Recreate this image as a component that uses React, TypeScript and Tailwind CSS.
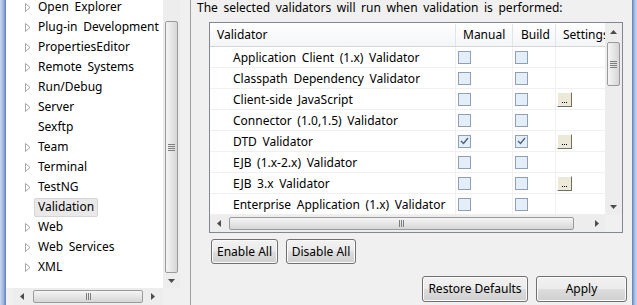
import React from "react";

const tree = [
  { label: "Open Explorer", arrow: true },
  { label: "Plug-in Development", arrow: true },
  { label: "PropertiesEditor", arrow: true },
  { label: "Remote Systems", arrow: true },
  { label: "Run/Debug", arrow: true },
  { label: "Server", arrow: true },
  { label: "Sexftp", arrow: false },
  { label: "Team", arrow: true },
  { label: "Terminal", arrow: true },
  { label: "TestNG", arrow: true },
  { label: "Validation", arrow: false, selected: true },
  { label: "Web", arrow: true },
  { label: "Web Services", arrow: true },
  { label: "XML", arrow: true },
];

const validators = [
  { name: "Application Client (1.x) Validator", on: false, dots: false },
  { name: "Classpath Dependency Validator", on: false, dots: false },
  { name: "Client-side JavaScript", on: false, dots: true },
  { name: "Connector (1.0,1.5) Validator", on: false, dots: false },
  { name: "DTD Validator", on: true, dots: true },
  { name: "EJB (1.x-2.x) Validator", on: false, dots: false },
  { name: "EJB 3.x Validator", on: false, dots: true },
  { name: "Enterprise Application (1.x) Validator", on: false, dots: false },
];

function Tri({ dir }: { dir: "up" | "down" | "left" | "right" }) {
  const pts = {
    up: "0,4 7,4 3.5,0",
    down: "0,0 7,0 3.5,4",
    left: "4,0 4,7 0,3.5",
    right: "0,0 0,7 4,3.5",
  }[dir];
  const vertical = dir === "up" || dir === "down";
  return (
    <svg width={vertical ? 7 : 4} height={vertical ? 4 : 7} className="block">
      <polygon points={pts} fill="#4d4d4d" />
    </svg>
  );
}

function Grip({ vertical }: { vertical?: boolean }) {
  return vertical ? (
    <div className="flex flex-col gap-[1px]">
      <span className="block h-px w-[7px] bg-[#7d7d7d]" />
      <span className="block h-px w-[7px] bg-[#7d7d7d]" />
      <span className="block h-px w-[7px] bg-[#7d7d7d]" />
      <span className="block h-px w-[7px] bg-[#7d7d7d]" />
    </div>
  ) : (
    <div className="flex gap-[1px]">
      <span className="block h-[7px] w-px bg-[#7d7d7d]" />
      <span className="block h-[7px] w-px bg-[#7d7d7d]" />
      <span className="block h-[7px] w-px bg-[#7d7d7d]" />
    </div>
  );
}

function Checkbox({ checked }: { checked: boolean }) {
  return (
    <span className="flex h-[13px] w-[13px] items-center justify-center border border-[#8e9fb6] bg-[#e4eef9]">
      {checked && (
        <svg width="9" height="8" viewBox="0 0 9 8">
          <path d="M1 4 L3.5 6.5 L8 1" stroke="#4b6283" strokeWidth="1.4" fill="none" />
        </svg>
      )}
    </span>
  );
}

function Dots() {
  return (
    <span className="flex h-[15px] w-[15px] items-end justify-center border-t border-l border-t-white border-l-white border-r border-b border-r-[#716f64] border-b-[#716f64] bg-[#ece9d8] pb-[3px]">
      <span className="flex gap-[1px]">
        <span className="block h-px w-px bg-black" />
        <span className="block h-px w-px bg-black" />
        <span className="block h-px w-px bg-black" />
      </span>
    </span>
  );
}

function Button({ label, w, h }: { label: string; w: string; h: string }) {
  return (
    <button
      className={`${w} ${h} flex items-center justify-center rounded-[3px] border border-[#707070] bg-[linear-gradient(#f2f2f2_0%,#ebebeb_48%,#dddddd_52%,#cfcfcf_100%)] shadow-[inset_0_0_0_1px_#fbfbfb] text-[12px] text-black`}
    >
      {label}
    </button>
  );
}

export default function App() {
  return (
    <div className="flex h-[305px] w-[637px] overflow-hidden bg-[#f0f0f0] font-['Noto_Sans',sans-serif] text-[12px] leading-[16px] text-black [word-spacing:2.5px]">
      {/* window frame, left */}
      <div className="w-[6px] shrink-0 bg-linear-to-r from-[#c8d8ef] via-[#a3bbe0] to-[#5b80bc]" />

      {/* preference tree */}
      <div className="flex w-[174px] shrink-0 flex-col">
        <div className="flex h-[288px]">
          <div className="w-[157px] overflow-hidden bg-white">
            <ul className="-mt-[3px]">
              {tree.map((item) => (
                <li key={item.label} className="flex h-[20px] items-center pl-[19px]">
                  <span className="flex w-[6px] justify-center">
                    {item.arrow && (
                      <svg width="6" height="9" viewBox="0 0 6 9">
                        <path d="M0.5 0.5 L5 4.5 L0.5 8.5 Z" fill="none" stroke="#a6a6a6" />
                      </svg>
                    )}
                  </span>
                  <span
                    className={`ml-[3px] flex h-[19px] items-center whitespace-nowrap rounded-[2px] border px-[3px] ${
                      item.selected ? "border-[#d4d4d4] bg-[#e9e9e9]" : "border-transparent"
                    }`}
                  >
                    {item.label}
                  </span>
                </li>
              ))}
            </ul>
          </div>
          {/* vertical scrollbar */}
          <div className="flex w-[17px] flex-col bg-[#ededed]">
            <div className="mx-[2px] mt-[21px] flex h-[252px] items-center justify-center rounded-[2px] border border-[#9a9a9a] bg-linear-to-r from-[#f5f5f5] to-[#d6d6d6]">
              <Grip vertical />
            </div>
            <div className="flex flex-1 items-center justify-center">
              <Tri dir="down" />
            </div>
          </div>
        </div>
        <div className="flex h-[17px]">
          <div className="w-[7px]" />
          <div className="flex w-[150px] bg-[#ededed]">
            <div className="flex w-[17px] items-center justify-center">
              <Tri dir="left" />
            </div>
            <div className="my-[2px] ml-[3px] flex w-[110px] items-center justify-center rounded-[2px] border border-[#9a9a9a] bg-linear-to-b from-[#f5f5f5] to-[#d6d6d6]">
              <Grip />
            </div>
            <div className="flex flex-1 items-center justify-center">
              <Tri dir="right" />
            </div>
          </div>
          <div className="w-[17px]" />
        </div>
      </div>

      <div className="w-[10px] shrink-0" />
      <div className="w-px shrink-0 bg-[#a0a0a0]" />

      {/* validation page */}
      <div className="flex w-[441px] shrink-0 flex-col">
        <p className="pl-[6px] whitespace-nowrap">
          The selected validators will run when validation is performed:
        </p>

        <div className="ml-[18px] mt-[6px] flex h-[211px] w-[414px] border border-[#828790] bg-white">
          <div className="flex w-[395px] flex-col">
            {/* header */}
            <div className="flex h-[24px] border-b border-[#d5d5d5] bg-linear-to-b from-white to-[#f4f5f7] pt-px">
              <div className="flex w-[246px] items-center border-r border-[#e3e4e6] pl-[7px]">Validator</div>
              <div className="flex w-[57px] items-center border-r border-[#e3e4e6] pl-[7px]">Manual</div>
              <div className="flex w-[43px] items-center border-r border-[#e3e4e6] pl-[8px]">Build</div>
              <div className="flex w-[49px] items-center overflow-hidden whitespace-nowrap pl-[7px]">Settings</div>
            </div>
            {/* rows */}
            {validators.map((v) => (
              <div key={v.name} className="flex h-[21px] border-b border-[#f0f0f0]">
                <div className="flex w-[246px] items-center overflow-hidden whitespace-nowrap border-r border-[#f0f0f0] pl-[23px] pt-[2px]">
                  {v.name}
                </div>
                <div className="flex w-[57px] items-center border-r border-[#f0f0f0] pl-[2px]">
                  <Checkbox checked={v.on} />
                </div>
                <div className="flex w-[43px] items-center border-r border-[#f0f0f0] pl-[2px]">
                  <Checkbox checked={v.on} />
                </div>
                <div className="flex w-[49px] items-center pl-px">{v.dots && <Dots />}</div>
              </div>
            ))}
            {/* horizontal scrollbar */}
            <div className="flex h-[17px] bg-[#ededed]">
              <div className="flex w-[17px] items-center justify-center">
                <Tri dir="left" />
              </div>
              <div className="my-[2px] ml-[2px] flex w-[345px] items-center justify-center rounded-[2px] border border-[#9a9a9a] bg-linear-to-b from-[#f5f5f5] to-[#d6d6d6]">
                <Grip />
              </div>
              <div className="flex flex-1 items-center justify-end pr-[6px]">
                <Tri dir="right" />
              </div>
            </div>
          </div>
          {/* vertical scrollbar */}
          <div className="flex w-[17px] flex-col">
            <div className="flex h-[192px] flex-col bg-[#ededed]">
              <div className="flex h-[17px] items-center justify-center">
                <Tri dir="up" />
              </div>
              <div className="mx-[2px] mt-[2px] flex h-[44px] items-center justify-center rounded-[2px] border border-[#9a9a9a] bg-linear-to-r from-[#f5f5f5] to-[#d6d6d6]">
                <Grip vertical />
              </div>
              <div className="flex-1" />
              <div className="flex h-[17px] items-center justify-center">
                <Tri dir="down" />
              </div>
            </div>
            <div className="flex-1 bg-[#f0f0f0]" />
          </div>
        </div>

        <div className="ml-[20px] mt-[6px] flex gap-[8px]">
          <Button label="Enable All" w="w-[67px]" h="h-[25px]" />
          <Button label="Disable All" w="w-[70px]" h="h-[25px]" />
        </div>

        <div className="mt-[12px] flex justify-end gap-[8px] pr-[5px]">
          <Button label="Restore Defaults" w="w-[106px]" h="h-[26px]" />
          <Button label="Apply" w="w-[91px]" h="h-[26px]" />
        </div>
      </div>

      {/* window frame, right */}
      <div className="w-[5px] shrink-0 bg-linear-to-r from-[#5b80bc] via-[#a3bbe0] to-[#c8d8ef]" />
    </div>
  );
}
